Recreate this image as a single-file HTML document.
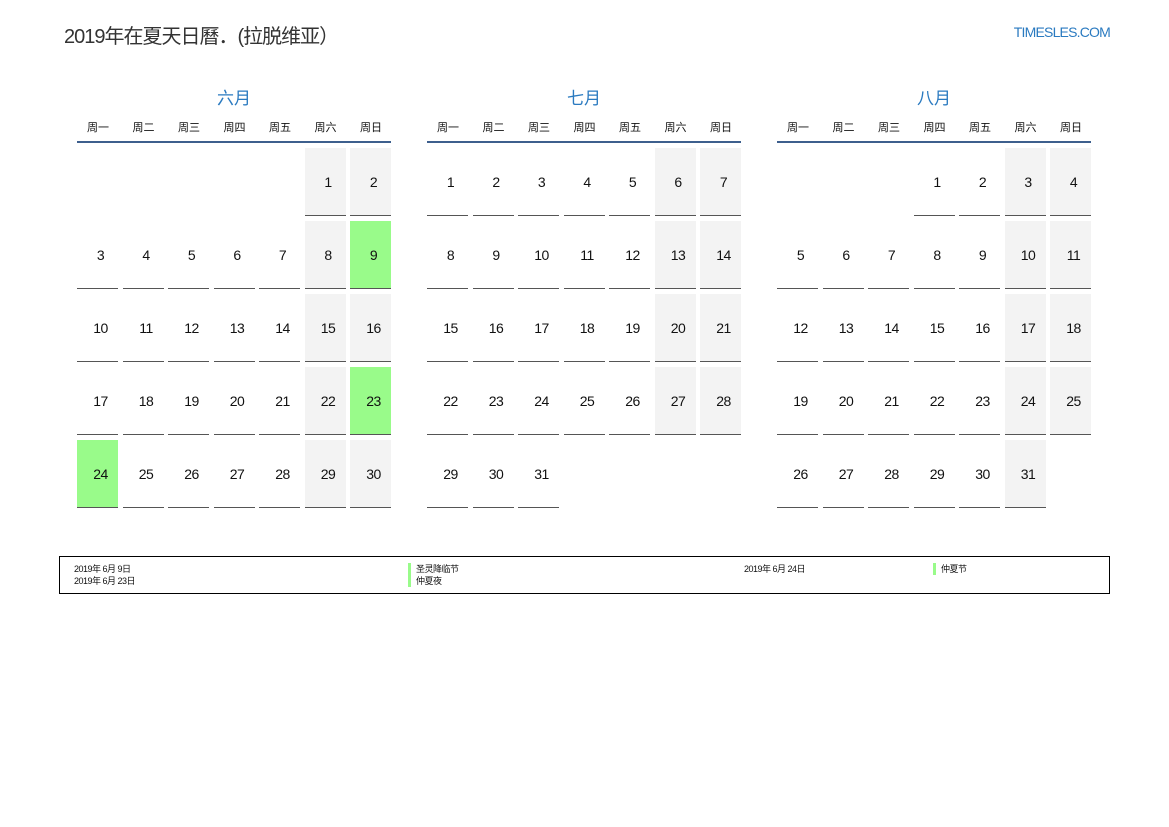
<!DOCTYPE html>
<html><head><meta charset="utf-8"><style>
*{margin:0;padding:0;box-sizing:border-box}
body{width:1169px;height:827px;background:#fff;position:relative;font-family:"Liberation Sans","Noto Sans CJK SC",sans-serif;color:#111}
.title{position:absolute;left:64px;top:20px;font-size:20px;color:#333;letter-spacing:-1px}
.site{position:absolute;right:59px;top:24px;font-size:14px;color:#2a7ac0;letter-spacing:-0.8px}
.m{position:absolute;top:84px;width:314px}
.mt{text-align:center;font-size:17px;color:#2a7ac0;height:24px}
.wd{position:absolute;top:34px;left:0;width:314px;height:25px;border-bottom:2px solid #3d5f8d}
.wd span{position:absolute;width:42px;text-align:center;font-size:11px;top:1px}
.c{position:absolute;width:41px;height:68px;border-bottom:1px solid #555;text-align:center;line-height:68px;font-size:14px;padding-left:6px;letter-spacing:-0.5px}
.w{background:#f3f3f3}.h{background:#99fb8a}
.leg{position:absolute;left:59px;top:556px;width:1051px;height:38px;border:1px solid #000;font-size:9px;letter-spacing:-0.5px}
.leg div{position:absolute;line-height:12px}
.bar{border-left:3px solid #99fb8a;padding-left:5px}
</style></head><body>
<div class="title">2019年在夏天日曆．(拉脱维亚）</div>
<div class="site">TIMESLES.COM</div>
<div id="cal"></div>
<div class="leg">
<div style="left:14px;top:6px">2019年 6月 9日<br>2019年 6月 23日</div>
<div class="bar" style="left:348px;top:6px">圣灵降临节</div>
<div class="bar" style="left:348px;top:18px">仲夏夜</div>
<div style="left:684px;top:6px">2019年 6月 24日</div>
<div class="bar" style="left:873px;top:6px">仲夏节</div>
</div>
<script>
var months=[["六月",5,30,[9,23,24]],["七月",0,31,[]],["八月",3,31,[]]];
var wd=["周一","周二","周三","周四","周五","周六","周日"];
var h="";
months.forEach(function(m,i){
 var L=77+350*i;
 h+='<div class="m" style="left:'+L+'px"><div class="mt">'+m[0]+'</div><div class="wd">';
 wd.forEach(function(d,j){h+='<span style="left:'+(j*45.5)+'px">'+d+'</span>'});
 h+='</div></div>';
 for(var d=1;d<=m[2];d++){
  var p=m[1]+d-1,col=p%7,row=Math.floor(p/7);
  var cls=m[3].indexOf(d)>=0?'h':(col>=5?'w':'');
  h+='<div class="c '+cls+'" style="left:'+(L+col*45.5)+'px;top:'+(148+row*73)+'px">'+d+'</div>';
 }
});
document.getElementById('cal').innerHTML=h;
</script>
</body></html>
